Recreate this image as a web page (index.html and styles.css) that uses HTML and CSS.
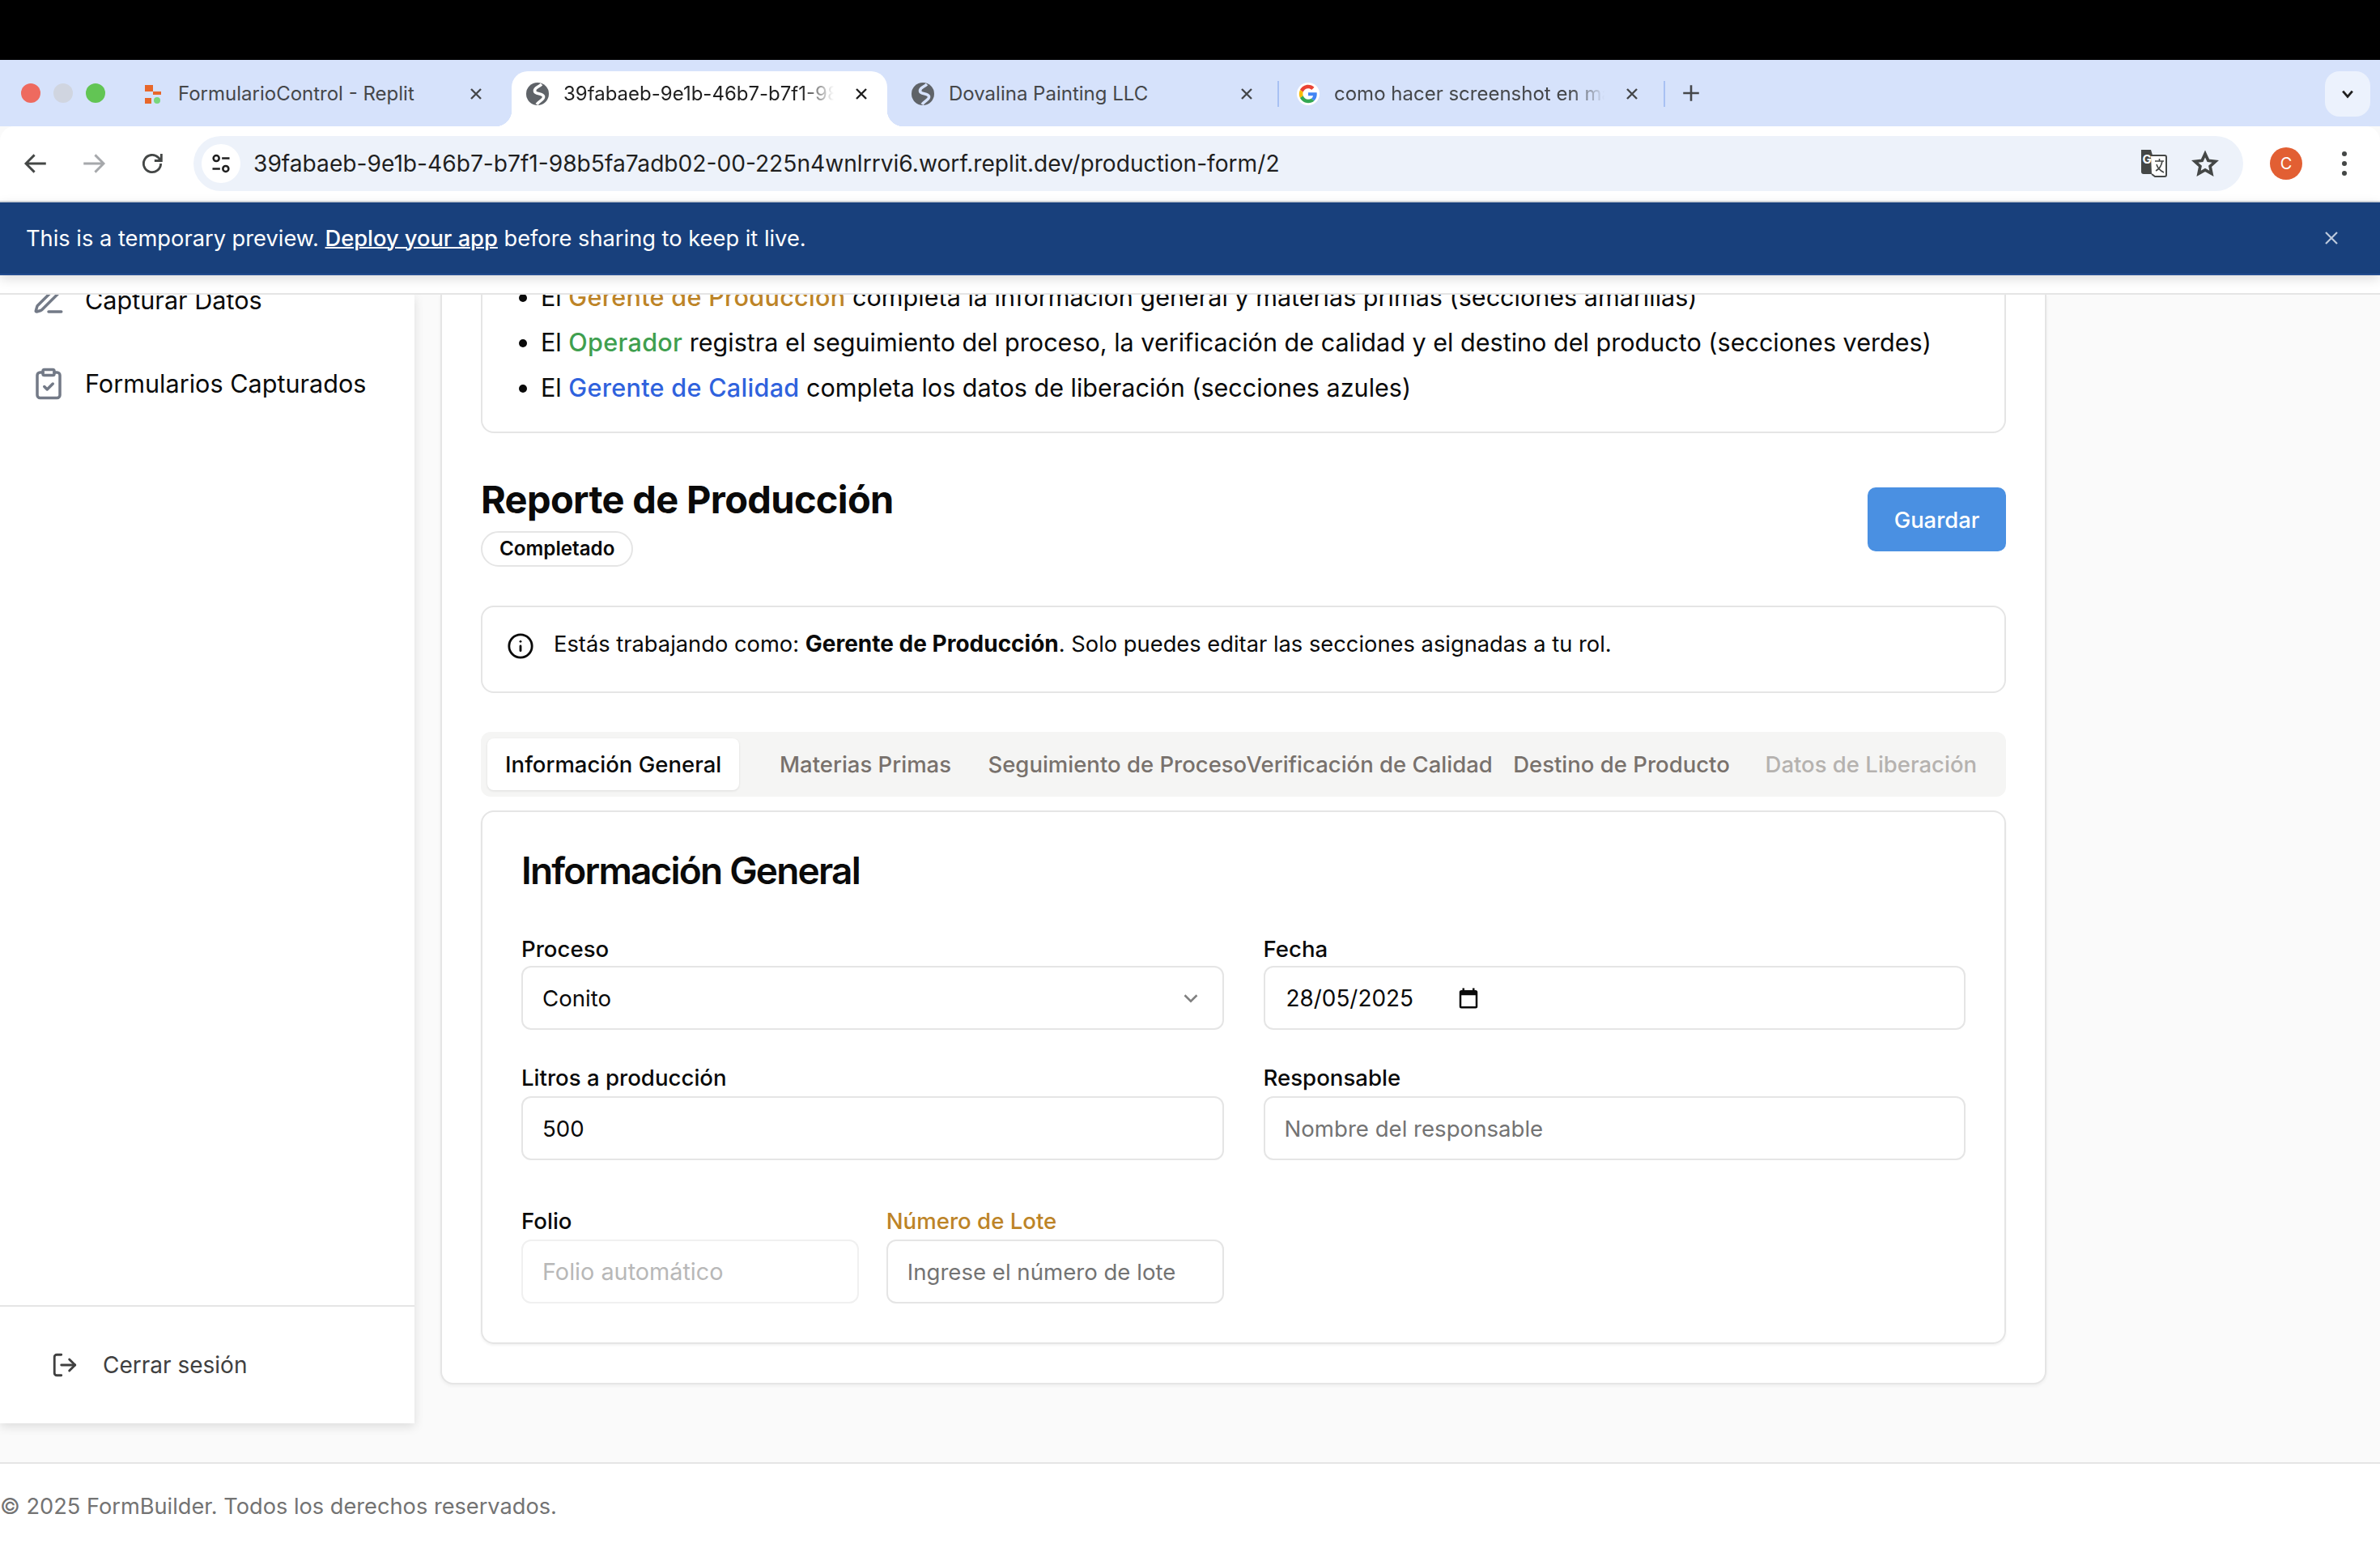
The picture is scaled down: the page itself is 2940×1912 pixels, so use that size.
FILE: index.html
```html
<!DOCTYPE html>
<html>

<head>
    <title>FormBuilder</title>
    <link rel="stylesheet" href="styles.css">
</head>

<body>
    <div class="mac-bar"></div>

    <div class="tabstrip">
        <div class="lights">
            <span class="light red"></span>
            <span class="light grey"></span>
            <span class="light green"></span>
        </div>
        <div class="tab">
            <svg class="favicon" viewBox="0 0 28 28"><rect x="5" y="3" width="10" height="8" fill="#e8672a"/><rect x="15" y="11" width="10" height="4" fill="#e8672a"/><rect x="5" y="19" width="8" height="7" fill="#e8672a"/><circle cx="20" cy="22" r="4" fill="#79d67c"/></svg>
            <span class="tab-title">FormularioControl - Replit</span>
            <svg class="tab-close" viewBox="0 0 24 24"><path d="M6 6l12 12M18 6L6 18"/></svg>
        </div>
        <div class="tab active">
            <svg class="favicon" viewBox="0 0 28 28"><circle cx="14" cy="14" r="14" fill="#5f6368"/><path class="globe-land on-white" d="M19 2C15 6 10 6 10.500 10.500 11 15 20 12.500 21.500 17 22.500 21 16 22.500 13 27"/></svg>
            <span class="tab-title fade">39fabaeb-9e1b-46b7-b7f1-98b5fa7adb02</span>
            <svg class="tab-close dark" viewBox="0 0 24 24"><path d="M6 6l12 12M18 6L6 18"/></svg>
        </div>
        <div class="tab">
            <svg class="favicon" viewBox="0 0 28 28"><circle cx="14" cy="14" r="14" fill="#5f6368"/><path class="globe-land" d="M19 2C15 6 10 6 10.500 10.500 11 15 20 12.500 21.500 17 22.500 21 16 22.500 13 27"/></svg>
            <span class="tab-title">Dovalina Painting LLC</span>
            <svg class="tab-close" viewBox="0 0 24 24"><path d="M6 6l12 12M18 6L6 18"/></svg>
        </div>
        <span class="tab-sep"></span>
        <div class="tab">
            <svg class="favicon" viewBox="-6 -6 60 60">
                <circle cx="24" cy="24" r="30" fill="#fff"/>
                <path fill="#EA4335" d="M24 9.500c3.540 0 6.710 1.220 9.210 3.600l6.850-6.850C35.900 2.380 30.470 0 24 0 14.620 0 6.510 5.380 2.560 13.220l7.980 6.190C12.430 13.720 17.740 9.500 24 9.500z"/>
                <path fill="#4285F4" d="M46.980 24.550c0-1.570-.15-3.090-.38-4.550H24v9.020h12.940c-.58 2.960-2.260 5.480-4.780 7.180l7.730 6c4.510-4.180 7.090-10.360 7.090-17.650z"/>
                <path fill="#FBBC05" d="M10.530 28.590c-.48-1.450-.76-2.990-.76-4.590s.27-3.140.76-4.590l-7.980-6.190C.92 16.460 0 20.120 0 24c0 3.880.92 7.540 2.560 10.780l7.970-6.190z"/>
                <path fill="#34A853" d="M24 48c6.480 0 11.930-2.130 15.890-5.810l-7.730-6c-2.150 1.450-4.920 2.300-8.160 2.300-6.260 0-11.570-4.220-13.470-9.910l-7.980 6.190C6.510 42.620 14.620 48 24 48z"/>
            </svg>
            <span class="tab-title fade">como hacer screenshot en mac</span>
            <svg class="tab-close" viewBox="0 0 24 24"><path d="M6 6l12 12M18 6L6 18"/></svg>
        </div>
        <span class="tab-sep end"></span>
        <svg class="new-tab" viewBox="0 0 24 24"><path d="M12 3v18M3 12h18"/></svg>
        <div class="tab-search">
            <svg viewBox="0 0 24 24"><path d="M5 8l7 8 7-8"/></svg>
        </div>
    </div>

    <div class="toolbar">
        <svg class="nav-icon" viewBox="0 0 24 24"><path d="M21 12H4M11 4.500L3.500 12l7.500 7.500"/></svg>
        <svg class="nav-icon off" viewBox="0 0 24 24"><path d="M3 12h17M13 4.500l7.500 7.500-7.500 7.500"/></svg>
        <svg class="nav-icon" viewBox="0 0 24 24"><path d="M19.500 12a7.500 7.500 0 1 1-2.200-5.300L20 9.500M20 3.500v6h-6"/></svg>
        <div class="omnibox">
            <div class="site-info">
                <svg viewBox="0 0 24 24"><circle cx="7" cy="6.500" r="3"/><path d="M13 6.500h8M3 17.500h8"/><circle cx="17" cy="17.500" r="3"/></svg>
            </div>
            <span class="url">39fabaeb-9e1b-46b7-b7f1-98b5fa7adb02-00-225n4wnlrrvi6.worf.replit.dev/production-form/2</span>
            <svg class="translate" viewBox="0 0 34 36">
                <path d="M2 1h12l9 30H5a3 3 0 0 1-3-3z" fill="#444746"/>
                <text x="3.500" y="18" class="translate-g">G</text>
                <path d="M14 8h17a2 2 0 0 1 2 2v22a2 2 0 0 1-2 2H19l-4-3" fill="#fff" stroke="#444746" stroke-width="2"/>
                <path d="M19 15h11M24.500 12v3M28 15c-1 6-4 10-8 12M21 19c1 4 5 8 9 10" fill="none" stroke="#444746" stroke-width="1.600"/>
            </svg>
            <svg class="star" viewBox="0 0 24 24"><path d="M12 3.500l2.700 5.900 6.300.7-4.700 4.300 1.300 6.300L12 17.500l-5.600 3.200 1.300-6.300L3 10.100l6.300-.7z"/></svg>
        </div>
        <div class="avatar">C</div>
        <div class="kebab"><span></span><span></span><span></span></div>
    </div>

    <div class="preview-banner">
        <p>This is a temporary preview. <a href="#">Deploy your app</a> before sharing to keep it live.</p>
        <svg viewBox="0 0 24 24"><path d="M5 5l14 14M19 5L5 19"/></svg>
    </div>

    <div class="app-header"></div>

    <div class="viewport">
        <div class="layout">
            <aside class="sidebar">
                <nav class="side-nav">
                    <a class="side-link" href="#">
                        <svg class="icon" viewBox="0 0 24 24"><path d="M12 20h9"/><path d="M16.376 3.622a1 1 0 0 1 3.002 3.002L7.368 18.635a2 2 0 0 1-.855.506l-2.872.838a.5.5 0 0 1-.62-.62l.838-2.872a2 2 0 0 1 .506-.854z"/></svg>
                        Capturar Datos
                    </a>
                    <a class="side-link" href="#">
                        <svg class="icon" viewBox="0 0 24 24"><rect x="8" y="2" width="8" height="4" rx="1"/><path d="M16 4h2a2 2 0 0 1 2 2v14a2 2 0 0 1-2 2H6a2 2 0 0 1-2-2V6a2 2 0 0 1 2-2h2"/><path d="m9 14 2 2 4-4"/></svg>
                        Formularios Capturados
                    </a>
                </nav>
                <div class="side-foot">
                    <svg viewBox="0 0 24 24"><path d="M9 21H5a2 2 0 0 1-2-2V5a2 2 0 0 1 2-2h4"/><path d="M16 17l5-5-5-5"/><path d="M21 12H9"/></svg>
                    Cerrar sesión
                </div>
            </aside>

            <main class="main">
                <div class="sheet">
                    <div class="roles">
                        <ul>
                            <li>El <span class="amber">Gerente de Producción</span> completa la información general y materias primas (secciones amarillas)</li>
                            <li>El <span class="green-text">Operador</span> registra el seguimiento del proceso, la verificación de calidad y el destino del producto (secciones verdes)</li>
                            <li>El <span class="blue-text">Gerente de Calidad</span> completa los datos de liberación (secciones azules)</li>
                        </ul>
                    </div>

                    <div class="report-head">
                        <div>
                            <h1>Reporte de Producción</h1>
                            <span class="badge">Completado</span>
                        </div>
                        <button class="save">Guardar</button>
                    </div>

                    <div class="notice">
                        <svg viewBox="0 0 24 24"><circle cx="12" cy="12" r="10"/><path d="M12 16v-4"/><path d="M12 8h.01"/></svg>
                        <p>Estás trabajando como: <b>Gerente de Producción</b>. Solo puedes editar las secciones asignadas a tu rol.</p>
                    </div>

                    <div class="tabs">
                        <span class="tab-btn selected">Información General</span>
                        <span class="tab-btn">Materias Primas</span>
                        <span class="tab-btn">Seguimiento de Proceso</span>
                        <span class="tab-btn">Verificación de Calidad</span>
                        <span class="tab-btn">Destino de Producto</span>
                        <span class="tab-btn disabled">Datos de Liberación</span>
                    </div>

                    <section class="form-card">
                        <h2>Información General</h2>
                        <div class="fields">
                            <div class="field">
                                <label>Proceso</label>
                                <div class="control">
                                    <span>Conito</span>
                                    <svg class="chevron" viewBox="0 0 24 24"><path d="M6 9l6 6 6-6"/></svg>
                                </div>
                            </div>
                            <div class="field">
                                <label>Fecha</label>
                                <div class="control date">
                                    <span>28/05/2025</span>
                                    <svg class="calendar" viewBox="0 0 24 24"><path d="M19 4h-1V2h-2v2H8V2H6v2H5a2 2 0 0 0-2 2v14a2 2 0 0 0 2 2h14a2 2 0 0 0 2-2V6a2 2 0 0 0-2-2zm0 16H5V9h14v11z"/></svg>
                                </div>
                            </div>
                            <div class="field">
                                <label>Litros a producción</label>
                                <input class="control" value="500">
                            </div>
                            <div class="field">
                                <label>Responsable</label>
                                <input class="control" placeholder="Nombre del responsable">
                            </div>
                            <div class="sub-fields">
                                <div class="field">
                                    <label>Folio</label>
                                    <input class="control locked" placeholder="Folio automático" disabled>
                                </div>
                                <div class="field">
                                    <label class="amber">Número de Lote</label>
                                    <input class="control" placeholder="Ingrese el número de lote">
                                </div>
                            </div>
                        </div>
                    </section>
                </div>
            </main>
        </div>

        <footer class="page-foot">© 2025 FormBuilder. Todos los derechos reservados.</footer>
    </div>
</body>

</html>
```

FILE: styles.css
```css
* {
    box-sizing: border-box;
}

html,
body {
    margin: 0;
    height: 1912px;
    overflow: hidden;
}

body {
    font-family: Inter, "Noto Sans", sans-serif;
    color: #0a0a0a;
    background: #fafafa;
}

p,
h1,
h2,
ul {
    margin: 0;
    padding: 0;
}

/* browser frame */
.mac-bar {
    height: 74px;
    background: #000;
}

.tabstrip {
    height: 82px;
    background: #d6e2fb;
    display: flex;
    align-items: flex-end;
    position: relative;
}

.lights {
    width: 156px;
    height: 82px;
    display: flex;
    align-items: center;
    gap: 16px;
    padding-left: 26px;
}

.light {
    width: 24px;
    height: 24px;
    border-radius: 50%;
}

.light.red { background: #ee6a5f; }
.light.grey { background: #d0d5e0; }
.light.green { background: #62c554; }

.tab {
    width: 464px;
    height: 68px;
    margin-right: 12px;
    padding: 0 20px 13px 18px;
    display: flex;
    align-items: center;
    position: relative;
    font-size: 24px;
    color: #45474a;
}

.tab.active {
    background: #fff;
    border-radius: 20px 20px 0 0;
    color: #1f1f1f;
}

.tab.active::before,
.tab.active::after {
    content: "";
    position: absolute;
    bottom: 0;
    width: 20px;
    height: 20px;
}

.tab.active::before {
    left: -20px;
    background: radial-gradient(circle at 0 0, transparent 20px, #fff 20.5px);
}

.tab.active::after {
    right: -20px;
    background: radial-gradient(circle at 100% 0, transparent 20px, #fff 20.5px);
}

.favicon {
    width: 28px;
    height: 28px;
    flex: none;
    margin-right: 18px;
}

.globe-land {
    fill: none;
    stroke: #d6e2fb;
    stroke-width: 3.600;
}

.globe-land.on-white {
    stroke: #fff;
}

.tab-title {
    flex: 1;
    white-space: nowrap;
    overflow: hidden;
}

.tab-title.fade {
    -webkit-mask-image: linear-gradient(to right, #000 88%, transparent 100%);
    mask-image: linear-gradient(to right, #000 88%, transparent 100%);
}

.tab-close {
    width: 24px;
    height: 24px;
    flex: none;
    margin-left: 22px;
    fill: none;
    stroke: #45474a;
    stroke-width: 2.400;
}

.tab-close.dark {
    stroke: #1f1f1f;
}

.tab-sep {
    width: 2px;
    height: 32px;
    margin: 0 4px 24px -6px;
    background: #a8c1f3;
}

.tab-sep.end {
    margin-left: -5px;
    margin-right: 0;
}

.new-tab {
    width: 26px;
    height: 26px;
    margin: 0 0 28px 19px;
    fill: none;
    stroke: #45474a;
    stroke-width: 2.400;
}

.tab-search {
    position: absolute;
    right: 12px;
    top: 14px;
    width: 56px;
    height: 56px;
    border-radius: 18px;
    background: #ecf2fd;
    display: flex;
    align-items: center;
    justify-content: center;
}

.tab-search svg {
    width: 20px;
    height: 20px;
    fill: none;
    stroke: #1f1f1f;
    stroke-width: 3.400;
}

.toolbar {
    height: 94px;
    background: #fff;
    border-bottom: 2px solid #d5dadf;
    border-radius: 18px 18px 0 0;
    display: flex;
    align-items: center;
    padding-left: 27px;
    position: relative;
    z-index: 2;
}

.nav-icon {
    width: 34px;
    height: 34px;
    margin-right: 38px;
    fill: none;
    stroke: #444746;
    stroke-width: 2;
}

.nav-icon.off {
    stroke: #a6a8ab;
}

.nav-icon:nth-child(3) {
    margin-right: 34px;
}

.omnibox {
    width: 2532px;
    height: 68px;
    background: #edf2fa;
    border-radius: 34px;
    display: flex;
    align-items: center;
    padding-left: 10px;
    color: #1f1f1f;
}

.site-info {
    width: 48px;
    height: 48px;
    border-radius: 50%;
    background: #fff;
    display: flex;
    align-items: center;
    justify-content: center;
    flex: none;
    margin-right: 16px;
}

.site-info svg {
    width: 28px;
    height: 28px;
    fill: none;
    stroke: #1f1f1f;
    stroke-width: 2.200;
}

.url {
    flex: 1;
    font-size: 28.150px;
    white-space: nowrap;
}

.translate {
    width: 34px;
    height: 36px;
    margin-right: 30px;
}

.translate-g {
    font-size: 15px;
    font-weight: 700;
    fill: #fff;
}

.star {
    width: 34px;
    height: 34px;
    margin-right: 30px;
    fill: none;
    stroke: #444746;
    stroke-width: 2.600;
}

.avatar {
    width: 40px;
    height: 40px;
    margin-left: 33px;
    border-radius: 50%;
    background: #e25f33;
    color: #fff;
    font-size: 20px;
    display: flex;
    align-items: center;
    justify-content: center;
}

.kebab {
    margin-left: 49px;
    display: flex;
    flex-direction: column;
    gap: 6px;
}

.kebab span {
    width: 6px;
    height: 6px;
    border-radius: 50%;
    background: #444746;
}

.preview-banner {
    height: 90px;
    background: #18407c;
    border-bottom: 2px solid #244d8f;
    display: flex;
    align-items: center;
    justify-content: space-between;
    padding: 0 48px 0 32px;
    color: #fff;
    font-size: 27.250px;
    position: relative;
    z-index: 2;
    box-shadow: 0 4px 14px rgba(0, 0, 0, 0.14);
}

.preview-banner a {
    color: #fff;
    font-weight: 500;
    text-decoration: underline;
    text-decoration-thickness: 2px;
}

.preview-banner svg {
    width: 24px;
    height: 24px;
    fill: none;
    stroke: #bcc9dc;
    stroke-width: 2.200;
}

.app-header {
    height: 24px;
    background: #fff;
    border-bottom: 2px solid #e5e5e5;
}

/* page */
.viewport {
    height: 1548px;
    overflow: hidden;
}

.layout {
    height: 1442px;
    display: flex;
    align-items: flex-start;
}

.sidebar {
    width: 512px;
    height: 1394px;
    flex: none;
    background: #fff;
    display: flex;
    flex-direction: column;
    box-shadow: 0 4px 12px rgba(0, 0, 0, 0.12);
}

.side-nav {
    flex: 1;
    margin-top: -45px;
}

.side-link {
    height: 103px;
    display: flex;
    align-items: center;
    gap: 24px;
    padding-left: 39px;
    font-size: 30.600px;
    color: #0a0a0a;
    text-decoration: none;
}

.icon {
    width: 42px;
    height: 42px;
    fill: none;
    stroke: #737a87;
    stroke-width: 2;
    stroke-linecap: round;
    stroke-linejoin: round;
}

.side-foot {
    height: 146px;
    border-top: 2px solid #e5e5e5;
    display: flex;
    align-items: center;
    gap: 30px;
    padding-left: 63px;
    font-size: 28px;
    color: #404040;
}

.side-foot svg {
    width: 34px;
    height: 34px;
    fill: none;
    stroke: #404040;
    stroke-width: 2;
    stroke-linecap: round;
    stroke-linejoin: round;
}

.main {
    flex: 1;
    padding-left: 32px;
}

.sheet {
    width: 1984px;
    background: #fff;
    border: 2px solid #e5e5e5;
    border-top: 0;
    border-radius: 0 0 16px 16px;
    padding: 0 48px 48px;
    box-shadow: 0 2px 4px rgba(0, 0, 0, 0.05);
}

.roles {
    display: flow-root;
    border: 2px solid #e5e5e5;
    border-top: 0;
    border-radius: 0 0 16px 16px;
    height: 171px;
    font-size: 30.550px;
    line-height: 56px;
}

.roles ul {
    margin-top: -25px;
    padding-left: 72px;
}

.roles span {
    font-weight: 500;
    letter-spacing: 0.300px;
}

.amber { color: #bd8427; }
.green-text { color: #3f9f4f; }
.blue-text { color: #2f62dd; }

.report-head {
    margin-top: 54px;
    display: flex;
    justify-content: space-between;
    align-items: flex-start;
}

h1 {
    font-size: 47px;
    line-height: 56px;
    font-weight: 700;
    letter-spacing: -0.670px;
}

.badge {
    display: inline-block;
    margin-top: 11px;
    height: 44px;
    line-height: 40px;
    padding: 0 21px;
    border: 2px solid #e5e5e5;
    border-radius: 22px;
    font-size: 24.200px;
    font-weight: 600;
}

.save {
    margin-top: 13px;
    width: 171px;
    height: 79px;
    border: 0;
    border-radius: 10px;
    background: #4a90e2;
    color: #fff;
    font: 500 27.400px Inter, sans-serif;
}

.notice {
    margin-top: 48px;
    height: 108px;
    border: 2px solid #e5e5e5;
    border-radius: 16px;
    padding: 28px 30px 0;
    display: flex;
    gap: 24px;
    font-size: 27.300px;
    line-height: 34px;
}

.notice b {
    font-size: 28px;
}

.notice svg {
    width: 34px;
    height: 34px;
    flex: none;
    margin-top: 3px;
    fill: none;
    stroke: #0a0a0a;
    stroke-width: 2;
    stroke-linecap: round;
}

.tabs {
    margin-top: 48px;
    height: 80px;
    padding: 8px;
    background: #f5f5f4;
    border-radius: 12px;
    display: grid;
    grid-template-columns: repeat(6, minmax(0, 1fr));
}

.tab-btn {
    display: flex;
    align-items: center;
    justify-content: center;
    white-space: nowrap;
    font-size: 27.500px;
    font-weight: 500;
    color: #78716c;
    border-radius: 8px;
}

.tab-btn.selected {
    background: #fff;
    color: #0a0a0a;
    box-shadow: 0 1px 3px rgba(0, 0, 0, 0.1);
}

.tab-btn.disabled {
    color: #b5b2af;
    padding-right: 6px;
}

.form-card {
    margin-top: 17px;
    border: 2px solid #e5e5e5;
    border-radius: 16px;
    padding: 47px 48px 48px;
    box-shadow: 0 2px 3px rgba(0, 0, 0, 0.05);
}

h2 {
    font-size: 46px;
    line-height: 50px;
    font-weight: 600;
    letter-spacing: -1.800px;
}

.fields {
    margin-top: 55px;
    display: grid;
    grid-template-columns: minmax(0, 1fr) minmax(0, 1fr);
    column-gap: 49px;
    row-gap: 42px;
}

.sub-fields {
    grid-column: 1;
    margin-top: 16px;
    display: grid;
    grid-template-columns: minmax(0, 1fr) minmax(0, 1fr);
    column-gap: 34px;
}

.field input {
    margin-top: 6px;
}

label {
    display: block;
    font-size: 27.600px;
    line-height: 34px;
    font-weight: 500;
    margin-bottom: 4px;
}

.control {
    width: 100%;
    height: 79px;
    border: 2px solid #e5e5e5;
    border-radius: 12px;
    padding: 0 24px;
    background: #fff;
    display: flex;
    align-items: center;
    justify-content: space-between;
    font: 400 27.600px Inter, sans-serif;
    color: #0a0a0a;
}

.control::placeholder {
    color: #737373;
    opacity: 1;
}

.control.locked {
    border-color: #f0f0f0;
    font-size: 28.800px;
}

.control.locked::placeholder {
    color: #b8b8b8;
}

.control.date {
    justify-content: flex-start;
    padding-left: 26px;
    gap: 53px;
    font-size: 27.900px;
}

.chevron {
    width: 30px;
    height: 30px;
    fill: none;
    stroke: #808080;
    stroke-width: 2;
}

.calendar {
    width: 30px;
    height: 30px;
    fill: #0a0a0a;
}

.page-foot {
    height: 106px;
    background: #fff;
    border-top: 2px solid #e5e5e5;
    display: flex;
    align-items: center;
    font-size: 27.200px;
    color: #737373;
}
```
